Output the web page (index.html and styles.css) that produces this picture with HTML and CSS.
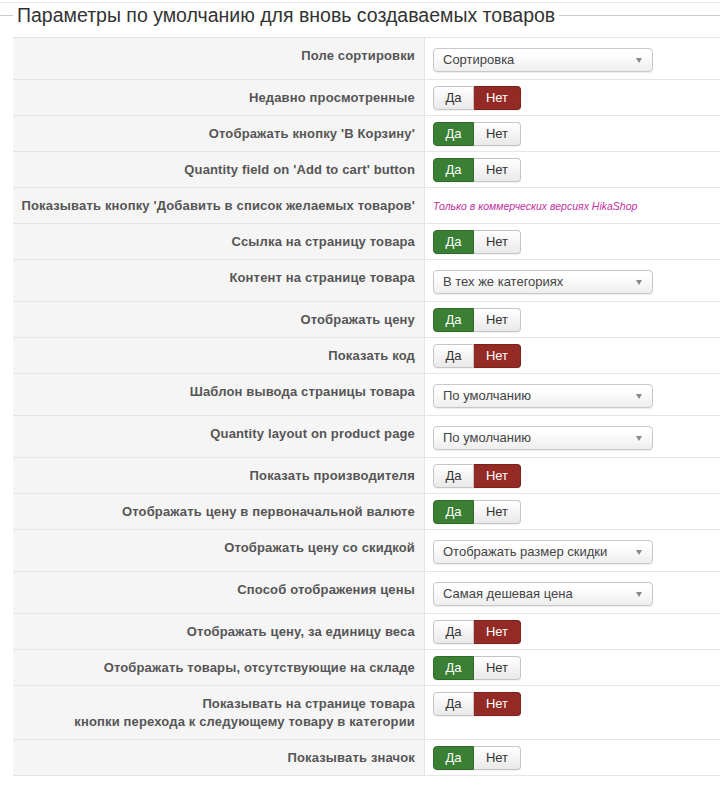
FILE: index.html
```html
<!DOCTYPE html>
<html lang="ru">
<head>
  <meta charset="UTF-8">
  <title>Параметры по умолчанию</title>
  <link rel="stylesheet" href="styles.css">
</head>
<body>
  <div class="page">
    <fieldset class="options">
      <legend>Параметры по умолчанию для вновь создаваемых товаров</legend>
      <table class="params">
        <tr class="row-select">
          <td class="key">Поле сортировки</td>
          <td class="val"><div class="select">Сортировка</div></td>
        </tr>
        <tr>
          <td class="key">Недавно просмотренные</td>
          <td class="val"><div class="toggle"><span class="yes">Да</span><span class="no off">Нет</span></div></td>
        </tr>
        <tr>
          <td class="key">Отображать кнопку 'В Корзину'</td>
          <td class="val"><div class="toggle"><span class="yes on">Да</span><span class="no">Нет</span></div></td>
        </tr>
        <tr>
          <td class="key">Quantity field on 'Add to cart' button</td>
          <td class="val"><div class="toggle"><span class="yes on">Да</span><span class="no">Нет</span></div></td>
        </tr>
        <tr>
          <td class="key">Показывать кнопку 'Добавить в список желаемых товаров'</td>
          <td class="val"><span class="note">Только в коммерческих версиях HikaShop</span></td>
        </tr>
        <tr>
          <td class="key">Ссылка на страницу товара</td>
          <td class="val"><div class="toggle"><span class="yes on">Да</span><span class="no">Нет</span></div></td>
        </tr>
        <tr class="row-select">
          <td class="key">Контент на странице товара</td>
          <td class="val"><div class="select">В тех же категориях</div></td>
        </tr>
        <tr>
          <td class="key">Отображать цену</td>
          <td class="val"><div class="toggle"><span class="yes on">Да</span><span class="no">Нет</span></div></td>
        </tr>
        <tr>
          <td class="key">Показать код</td>
          <td class="val"><div class="toggle"><span class="yes">Да</span><span class="no off">Нет</span></div></td>
        </tr>
        <tr class="row-select">
          <td class="key">Шаблон вывода страницы товара</td>
          <td class="val"><div class="select">По умолчанию</div></td>
        </tr>
        <tr class="row-select">
          <td class="key">Quantity layout on product page</td>
          <td class="val"><div class="select">По умолчанию</div></td>
        </tr>
        <tr>
          <td class="key">Показать производителя</td>
          <td class="val"><div class="toggle"><span class="yes">Да</span><span class="no off">Нет</span></div></td>
        </tr>
        <tr>
          <td class="key">Отображать цену в первоначальной валюте</td>
          <td class="val"><div class="toggle"><span class="yes on">Да</span><span class="no">Нет</span></div></td>
        </tr>
        <tr class="row-select">
          <td class="key">Отображать цену со скидкой</td>
          <td class="val"><div class="select">Отображать размер скидки</div></td>
        </tr>
        <tr class="row-select">
          <td class="key">Способ отображения цены</td>
          <td class="val"><div class="select">Самая дешевая цена</div></td>
        </tr>
        <tr>
          <td class="key">Отображать цену, за единицу веса</td>
          <td class="val"><div class="toggle"><span class="yes">Да</span><span class="no off">Нет</span></div></td>
        </tr>
        <tr>
          <td class="key">Отображать товары, отсутствующие на складе</td>
          <td class="val"><div class="toggle"><span class="yes on">Да</span><span class="no">Нет</span></div></td>
        </tr>
        <tr>
          <td class="key">Показывать на странице товара<br>кнопки перехода к следующему товару в категории</td>
          <td class="val"><div class="toggle"><span class="yes">Да</span><span class="no off">Нет</span></div></td>
        </tr>
        <tr>
          <td class="key">Показывать значок</td>
          <td class="val"><div class="toggle"><span class="yes on">Да</span><span class="no">Нет</span></div></td>
        </tr>
      </table>
    </fieldset>
  </div>
</body>
</html>
```

FILE: styles.css
```css
body {
  margin: 0;
  font-family: "Liberation Sans", Arial, sans-serif;
  font-size: 13px;
  color: #333;
  background: #fff;
}

.page {
  margin-top: 2px;
  border-top: 1px solid #e8e8e8;
}

/* fieldset with only the top rule */
.options {
  margin: 0;
  padding: 0 0 0 13px;
  border: none;
  border-top: 1px solid #ccc;
}

.options legend {
  padding: 0 4px;
  font-size: 19.5px;
  line-height: 24px;
  color: #333;
}

.params {
  width: 100%;
  margin-top: 10px;
  border-collapse: collapse;
}

.params td {
  border-top: 1px solid #e5e5e5;
  border-bottom: 1px solid #e5e5e5;
  vertical-align: top;
}

.params .key {
  width: 402px;
  padding: 9px 9px 8px 0;
  background-color: #f5f5f5;
  border-right: 1px solid #e5e5e5;
  text-align: right;
  font-weight: bold;
  line-height: 18px;
  letter-spacing: 0.15px;
  color: #555;
  white-space: nowrap;
}

.params .val {
  padding: 6px 0 5px 8px;
}

.row-select .select {
  margin: 4px 0 2px;
}

/* dropdown */
.select {
  position: relative;
  box-sizing: border-box;
  width: 220px;
  height: 24px;
  padding: 0 24px 0 9px;
  border: 1px solid #c8c8c8;
  border-radius: 4px;
  background: linear-gradient(#fff 20%, #eee);
  box-shadow: 0 1px 1px rgba(0, 0, 0, 0.08);
  line-height: 22px;
  color: #444;
}

.select::after {
  content: "";
  position: absolute;
  right: 10px;
  top: 9px;
  border-left: 3.5px solid transparent;
  border-right: 3.5px solid transparent;
  border-top: 5px solid #888;
}

/* yes / no switch */
.toggle {
  display: flex;
  width: 88px;
  height: 24px;
}

.toggle span {
  box-sizing: border-box;
  height: 24px;
  line-height: 22px;
  text-align: center;
  border: 1px solid #c5c5c5;
  background: linear-gradient(#fff, #e9e9e9);
  color: #333;
  box-shadow: 0 1px 1px rgba(0, 0, 0, 0.06);
}

.toggle .yes {
  width: 41px;
  border-radius: 4px 0 0 4px;
}

.toggle .no {
  width: 47px;
  border-left: none;
  border-radius: 0 4px 4px 0;
}

.toggle .yes.on {
  background: #3a7f33;
  border-color: #2f6a29;
  color: #fff;
}

.toggle .no.off {
  background: #942a25;
  border-color: #7d211d;
  color: #fff;
}

.note {
  display: inline-block;
  margin-top: 6px;
  font-size: 10.5px;
  font-style: italic;
  color: #c0309f;
}
```
